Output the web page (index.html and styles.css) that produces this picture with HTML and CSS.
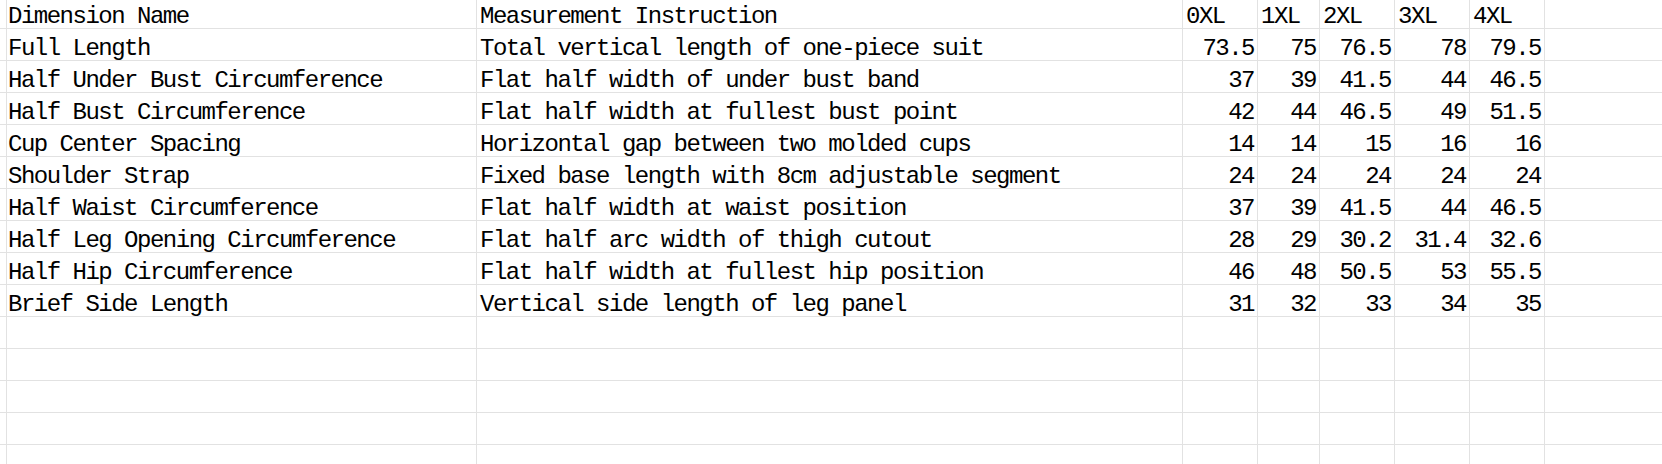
FILE: index.html
```html
<!DOCTYPE html>
<html>
<head>
<meta charset="utf-8">
<link rel="stylesheet" href="styles.css">
</head>
<body>
<div class="sheet">
  <div class="c"></div><div class="c">Dimension Name</div><div class="c">Measurement Instruction</div><div class="c">0XL</div><div class="c">1XL</div><div class="c">2XL</div><div class="c">3XL</div><div class="c">4XL</div><div class="c last"></div>

  <div class="c"></div><div class="c">Full Length</div><div class="c">Total vertical length of one-piece suit</div><div class="c n">73.5</div><div class="c n">75</div><div class="c n">76.5</div><div class="c n">78</div><div class="c n">79.5</div><div class="c last"></div>

  <div class="c"></div><div class="c">Half Under Bust Circumference</div><div class="c">Flat half width of under bust band</div><div class="c n">37</div><div class="c n">39</div><div class="c n">41.5</div><div class="c n">44</div><div class="c n">46.5</div><div class="c last"></div>

  <div class="c"></div><div class="c">Half Bust Circumference</div><div class="c">Flat half width at fullest bust point</div><div class="c n">42</div><div class="c n">44</div><div class="c n">46.5</div><div class="c n">49</div><div class="c n">51.5</div><div class="c last"></div>

  <div class="c"></div><div class="c">Cup Center Spacing</div><div class="c">Horizontal gap between two molded cups</div><div class="c n">14</div><div class="c n">14</div><div class="c n">15</div><div class="c n">16</div><div class="c n">16</div><div class="c last"></div>

  <div class="c"></div><div class="c">Shoulder Strap</div><div class="c">Fixed base length with 8cm adjustable segment</div><div class="c n">24</div><div class="c n">24</div><div class="c n">24</div><div class="c n">24</div><div class="c n">24</div><div class="c last"></div>

  <div class="c"></div><div class="c">Half Waist Circumference</div><div class="c">Flat half width at waist position</div><div class="c n">37</div><div class="c n">39</div><div class="c n">41.5</div><div class="c n">44</div><div class="c n">46.5</div><div class="c last"></div>

  <div class="c"></div><div class="c">Half Leg Opening Circumference</div><div class="c">Flat half arc width of thigh cutout</div><div class="c n">28</div><div class="c n">29</div><div class="c n">30.2</div><div class="c n">31.4</div><div class="c n">32.6</div><div class="c last"></div>

  <div class="c"></div><div class="c">Half Hip Circumference</div><div class="c">Flat half width at fullest hip position</div><div class="c n">46</div><div class="c n">48</div><div class="c n">50.5</div><div class="c n">53</div><div class="c n">55.5</div><div class="c last"></div>

  <div class="c"></div><div class="c">Brief Side Length</div><div class="c">Vertical side length of leg panel</div><div class="c n">31</div><div class="c n">32</div><div class="c n">33</div><div class="c n">34</div><div class="c n">35</div><div class="c last"></div>

  <div class="c"></div><div class="c"></div><div class="c"></div><div class="c"></div><div class="c"></div><div class="c"></div><div class="c"></div><div class="c"></div><div class="c last"></div>
  <div class="c"></div><div class="c"></div><div class="c"></div><div class="c"></div><div class="c"></div><div class="c"></div><div class="c"></div><div class="c"></div><div class="c last"></div>
  <div class="c"></div><div class="c"></div><div class="c"></div><div class="c"></div><div class="c"></div><div class="c"></div><div class="c"></div><div class="c"></div><div class="c last"></div>
  <div class="c"></div><div class="c"></div><div class="c"></div><div class="c"></div><div class="c"></div><div class="c"></div><div class="c"></div><div class="c"></div><div class="c last"></div>
  <div class="c"></div><div class="c"></div><div class="c"></div><div class="c"></div><div class="c"></div><div class="c"></div><div class="c"></div><div class="c"></div><div class="c last"></div>
</div>
</body>
</html>
```
FILE: styles.css
```css
html, body {
  margin: 0;
  padding: 0;
  background: #ffffff;
  overflow: hidden;
  height: 464px;
}
.sheet {
  margin-top: -3px;
  display: grid;
  grid-template-columns: 5px 472px 706px 75px 62px 75px 75px 75px 1fr;
  grid-auto-rows: 32px;
  font-family: "Liberation Mono", "DejaVu Sans Mono", monospace;
  font-size: 24px;
  letter-spacing: -1.5px;
  color: #000000;
}
.c {
  box-sizing: border-box;
  border-right: 1px solid #e2e2e2;
  border-bottom: 1px solid #e2e2e2;
  line-height: 23px;
  padding: 8px 3px 0 3px;
  white-space: nowrap;
  overflow: hidden;
}
.n {
  text-align: right;
}
.last {
  border-right: none;
}
```
